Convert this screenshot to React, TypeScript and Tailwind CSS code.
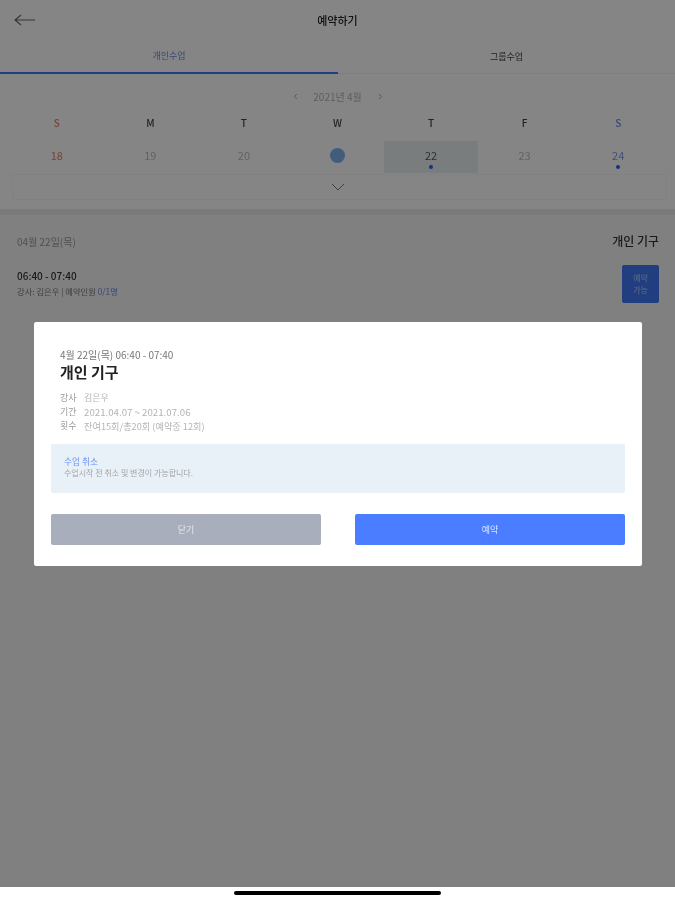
import { ChevronLeft, ChevronRight } from "lucide-react";

const days = [
  { w: "S", d: "18", wc: "text-[#e8806e]", dc: "text-[#e8806e]" },
  { w: "M", d: "19", wc: "text-[#444]", dc: "text-[#bbb]" },
  { w: "T", d: "20", wc: "text-[#444]", dc: "text-[#bbb]" },
  { w: "W", d: "", wc: "text-[#444]", dc: "" },
  { w: "T", d: "22", wc: "text-[#444]", dc: "text-[#555]", dot: true, selected: true },
  { w: "F", d: "23", wc: "text-[#444]", dc: "text-[#bbb]" },
  { w: "S", d: "24", wc: "text-[#6c88e6]", dc: "text-[#7d96ea]", dot: true },
];

const info = [
  { k: "강사", v: "김은우", size: "text-[9px]" },
  { k: "기간", v: "2021.04.07 ~ 2021.07.06", size: "text-[9.7px]" },
  { k: "횟수", v: "잔여15회/총20회 (예약중 12회)", size: "text-[9.2px]" },
];

function Page() {
  return (
    <div className="h-[887px] bg-[#f6f6f6]">
      <div className="bg-white">
        <div className="h-[40px] flex items-center justify-center relative">
          <svg className="absolute left-[14px] top-[13px]" width="22" height="14" viewBox="0 0 22 14" fill="none" stroke="#666" strokeWidth="1.1">
            <path d="M21 7H1M7 2L1 7l6 5" />
          </svg>
          <span className="text-[11px] font-medium text-[#222]">예약하기</span>
        </div>
        <div className="flex h-[34px]">
          <div className="w-[338px] flex items-center justify-center border-b-2 border-[#3f78f5] text-[9px] text-[#6c88e6]">
            개인수업
          </div>
          <div className="flex-1 flex items-center justify-center border-b border-[#f2f2f2] text-[9px] text-[#444]">
            그룹수업
          </div>
        </div>
        <div className="h-[22px] mt-[11px] flex items-center justify-center gap-[11px] text-[10px] text-[#b4b4b4]">
          <ChevronLeft size={9} className="text-[#888]" />
          <span className="w-[54px] text-center whitespace-nowrap">2021년 4월</span>
          <ChevronRight size={9} className="text-[#888]" />
        </div>
        <div className="grid grid-cols-7 px-[10px] mt-[4px]">
          {days.map((x, i) => (
            <div key={i} className={`h-[23px] flex items-center justify-center text-[10px] font-medium ${x.wc}`}>
              {x.w}
            </div>
          ))}
        </div>
        <div className="grid grid-cols-7 px-[10px] mt-[7px]">
          {days.map((x, i) => (
            <div
              key={i}
              className={`h-[32px] flex flex-col items-center pt-[7px] relative text-[11px] leading-[14px] ${x.dc} ${x.selected ? "bg-[#eaf0f2]" : ""}`}
            >
              {x.d === "" ? <span className="w-[15px] h-[15px] rounded-full bg-[#7fb0ee]" /> : x.d}
              {x.dot && <span className="absolute bottom-[4px] w-[4px] h-[4px] rounded-full bg-[#2d5ff0]" />}
            </div>
          ))}
        </div>
        <div className="ml-[12px] mr-[8px] mt-[1px] h-[26px] pr-[3px] border border-[#f7f7f7] flex items-center justify-center">
          <svg width="14" height="8" viewBox="0 0 14 8" fill="none" stroke="#777" strokeWidth="1">
            <path d="M1 1l6 6 6-6" />
          </svg>
        </div>
        <div className="h-[9px]" />
      </div>
      <div className="h-[6px] bg-[#eaeaea]" />
      <div className="bg-[#f6f6f6] pl-[17px] pr-[16px]">
        <div className="flex items-center justify-between pt-[17px]">
          <span className="text-[10px] text-[#999]">04월 22일(목)</span>
          <span className="text-[12px] font-medium text-[#333]">개인 기구</span>
        </div>
        <div className="flex items-start justify-between mt-[15px]">
          <div className="pt-[4px]">
            <div className="text-[10px] leading-[14px] font-medium text-[#333]">06:40 - 07:40</div>
            <div className="text-[8.3px] leading-[14px] mt-[1px] text-[#777]">
              강사: 김은우 | 예약인원 <span className="text-[#6c88e6]">0/1명</span>
            </div>
          </div>
          <div className="w-[37px] h-[38px] rounded-[2px] bg-[#3f78f5] text-[8px] leading-[12px] text-white/60 flex items-center justify-center text-center">
            예약
            <br />
            가능
          </div>
        </div>
      </div>
    </div>
  );
}

function Modal() {
  return (
    <div className="absolute inset-0 bg-black/48 pt-[322px] pl-[34px] pr-[33px]">
      <div className="h-[244px] rounded-[2px] bg-white pt-[26px] px-[17px]">
        <div className="px-[9px]">
          <div className="text-[10px] leading-[14px] text-[#777]">4월 22일(목) 06:40 - 07:40</div>
          <div className="text-[15px] leading-[20px] font-bold text-[#222]">개인 기구</div>
          <div className="mt-[9px]">
            {info.map((row) => (
              <div key={row.k} className={`flex gap-[8px] leading-[14px] text-[#b4b4b4] ${row.size}`}>
                <span className="w-[16px] shrink-0 whitespace-nowrap text-[9px] text-[#999]">{row.k}</span>
                <span>{row.v}</span>
              </div>
            ))}
          </div>
        </div>
        <div className="h-[49px] mt-[11px] rounded-[2px] bg-[#e8f0f8] px-[13px] pt-[12px]">
          <div className="text-[8.7px] leading-[11px] text-[#6b93ff]">수업 취소</div>
          <div className="text-[8px] leading-[11px] text-[#a4a4a4]">수업시작 전 취소 및 변경이 가능합니다.</div>
        </div>
        <div className="flex justify-between mt-[21px]">
          <button className="w-[270px] h-[31px] rounded-[2px] bg-[#a8aebb] text-[9px] text-white/70">닫기</button>
          <button className="w-[270px] h-[31px] rounded-[2px] bg-[#4a7dff] text-[9px] text-white/80">예약</button>
        </div>
      </div>
    </div>
  );
}

export default function App() {
  return (
    <div className="w-[675px] h-[900px] overflow-hidden bg-white blur-[0.7px] font-['Noto_Sans_CJK_KR','Liberation_Sans',sans-serif]">
      <div className="relative h-[887px]">
        <Page />
        <Modal />
      </div>
      <div className="h-[13px] flex justify-center pt-[4px]">
        <div className="w-[207px] h-[4px] rounded-full bg-black" />
      </div>
    </div>
  );
}
